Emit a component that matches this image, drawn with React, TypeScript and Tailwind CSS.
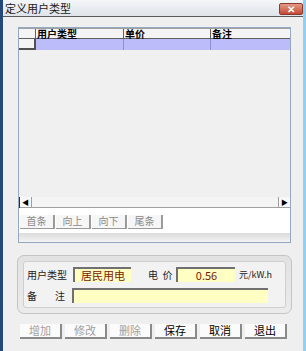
import React from 'react';

const font = { fontFamily: '"Noto Sans CJK SC", "Liberation Sans", sans-serif' };

type BtnProps = { label: string; disabled?: boolean; className?: string };

function NavBtn({ label }: BtnProps) {
  return (
    <div className="flex h-[14px] w-[35px] items-center justify-center border-r-2 border-b border-[#9a9a9a] bg-[#f6f6f6] text-[10px] leading-none text-[#8a8a8a]">
      {label}
    </div>
  );
}

function ActBtn({ label, disabled }: BtnProps) {
  return (
    <div
      className={`flex h-[15px] w-[42px] items-center justify-center border-r-2 border-b-2 border-[#8a8a8a] bg-[#fbfbfb] text-[11px] leading-none ${
        disabled ? 'text-[#a0a0a0]' : 'text-black'
      }`}
    >
      {label}
    </div>
  );
}

function Field({ value, className }: { value?: string; className: string }) {
  return (
    <div
      className={`flex h-[15px] items-center justify-center border-t-2 border-l-2 border-[#707070] bg-[#ffffc4] text-[11px] leading-none text-[#7a1a00] ${className}`}
    >
      {value}
    </div>
  );
}

export default function App() {
  return (
    <div
      className="flex h-[351px] w-[306px] flex-col overflow-hidden border-l-[3px] border-r-[3px] border-l-[#24487a] border-r-[#8fd0f4] bg-[#efefef]"
      style={font}
    >
      {/* title bar */}
      <div className="flex h-[17px] shrink-0 items-center justify-between border-b border-[#5a5a5a] bg-gradient-to-b from-[#f4f6f8] to-[#dfe4ea] pl-[2px]">
        <span className="text-[11px] leading-none text-[#1a1a1a]">定义用户类型</span>
        <div className="mt-[1px] flex h-[12px] w-[24px] items-center justify-center rounded-[2px] border border-[#8a3a30] bg-gradient-to-b from-[#e39a86] to-[#c24a34] text-[10px] font-bold leading-none text-white">
          ✕
        </div>
      </div>

      {/* body */}
      <div className="flex flex-1 flex-col pl-[15px] pr-[12px] pt-[10px]">
        {/* grid panel */}
        <div className="flex h-[216px] flex-col border border-[#93a9c2] bg-white">
          <div className="flex h-[180px] flex-col bg-[#f0f0f0]">
            {/* header */}
            <div className="flex h-[11px] border-t border-[#a0a0a0] text-[10px] font-bold leading-none text-black">
              <div className="w-[17px] border-r border-b border-[#606060] bg-[#f4f4f4]" />
              <div className="flex w-[88px] items-center border-r border-b border-[#606060] bg-[#f4f4f4] pl-[1px]">用户类型</div>
              <div className="flex w-[87px] items-center border-r border-b border-[#606060] bg-[#f4f4f4] pl-[1px]">单价</div>
              <div className="flex flex-1 items-center border-b border-[#606060] bg-[#f4f4f4] pl-[1px]">备注</div>
            </div>
            {/* data row */}
            <div className="flex h-[11px]">
              <div className="w-[17px] border-r-2 border-b-2 border-[#505050] bg-[#f4f4f4]" />
              <div className="w-[88px] border-r border-[#9090d0] bg-[#bcbcfa]" />
              <div className="w-[87px] border-r border-[#9090d0] bg-[#bcbcfa]" />
              <div className="flex-1 bg-[#bcbcfa]" />
            </div>
            <div className="flex-1" />
            {/* horizontal scrollbar */}
            <div className="flex h-[11px] items-stretch border-l border-[#303030] bg-[#f8f8f8]">
              <div className="flex w-[12px] items-center justify-center border-r border-b border-[#a0a0a0] text-[7px] leading-none text-black">◀</div>
              <div className="flex-1 border-b border-[#a0a0a0] bg-[#f4f4f4]" />
              <div className="flex w-[12px] items-center justify-center border-l border-b border-[#a0a0a0] text-[7px] leading-none text-black">▶</div>
            </div>
          </div>
          {/* nav buttons */}
          <div className="flex h-[25px] items-center gap-[1px] pl-[1px] pt-[2px]">
            <NavBtn label="首条" />
            <NavBtn label="向上" />
            <NavBtn label="向下" />
            <NavBtn label="尾条" />
          </div>
          <div className="flex-1 bg-gradient-to-b from-[#dcdcdc] to-[#f2f2f2]" />
        </div>

        {/* group box */}
        <div className="ml-[-1px] mr-[-1px] mt-[12px] rounded-[7px] border border-[#c4c4c4] bg-gradient-to-b from-[#e2e2e2] to-[#ebebeb] p-[5px]">
          <div className="flex flex-col gap-[6px] rounded-[3px] border border-[#cfcfcf] bg-[#f2f2f2] pb-[4px] pl-[3px] pt-[5px]">
            <div className="flex items-center text-[10px] leading-none text-[#222]">
              <span className="w-[46px]">用户类型</span>
              <Field value="居民用电" className="w-[58px]" />
              <span className="ml-[17px] w-[28px]">电&nbsp; 价</span>
              <Field value="0.56" className="w-[59px] text-[10px]" />
              <span className="ml-[4px] text-[9px]">元/kW.h</span>
            </div>
            <div className="flex items-center text-[10px] leading-none text-[#222]">
              <span className="w-[28px]">备</span>
              <span className="w-[17px]">注</span>
              <Field className="w-[196px]" />
            </div>
          </div>
        </div>

        {/* action buttons */}
        <div className="mt-[10px] flex gap-[3px] pl-[2px]">
          <ActBtn label="增加" disabled />
          <ActBtn label="修改" disabled />
          <ActBtn label="删除" disabled />
          <ActBtn label="保存" />
          <ActBtn label="取消" />
          <ActBtn label="退出" />
        </div>
      </div>
    </div>
  );
}
